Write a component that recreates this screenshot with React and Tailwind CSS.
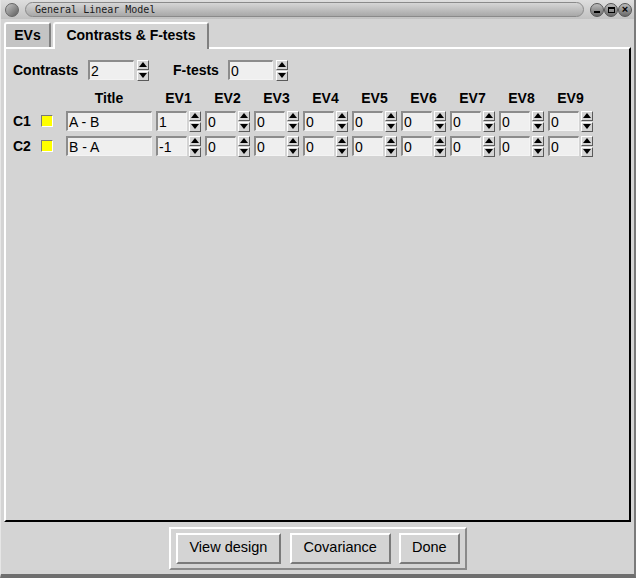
import React from "react";

const F = { fontFamily: '"Liberation Sans", Arial, sans-serif' };

function Arrow({ up }) {
  return (
    <svg width="8" height="5" viewBox="0 0 8 5">
      {up ? <polygon points="0,5 8,5 4,0" fill="#000" /> : <polygon points="0,0 8,0 4,5" fill="#000" />}
    </svg>
  );
}

function SpinBtn({ up }) {
  return (
    <div className="w-[12px] h-[10px] bg-[#d4d4d4] border-t border-l border-t-white border-l-white border-b border-r border-b-[#5a5a5a] border-r-[#5a5a5a] flex items-center justify-center">
      <Arrow up={up} />
    </div>
  );
}

function Spin() {
  return (
    <div className="flex flex-col gap-px">
      <SpinBtn up />
      <SpinBtn />
    </div>
  );
}

function Input({ w, value }) {
  return (
    <div
      className={`${w} h-[20px] bg-[#efefef] border-t-2 border-l-2 border-t-[#8c8c8c] border-l-[#8c8c8c] border-b border-r border-b-[#f4f4f4] border-r-[#f4f4f4] pl-[1px] flex items-center text-[14px] text-black leading-none`}
    >
      {value}
    </div>
  );
}

function EVCell({ value }) {
  return (
    <div className="w-[49px] flex items-center gap-[2px] shrink-0">
      <Input w="w-[31px]" value={value} />
      <Spin />
    </div>
  );
}

function Row({ label, title, vals }) {
  return (
    <div className="flex items-center h-[20px]">
      <div className="w-[28px] text-[14px] font-bold">{label}</div>
      <div className="w-[25px]">
        <div className="w-[12px] h-[12px] bg-[#ffff00] border-t border-l border-t-[#7a7a7a] border-l-[#7a7a7a] border-b border-r border-b-white border-r-white" />
      </div>
      <Input w="w-[86px]" value={title} />
      <div className="w-[4px]" />
      {vals.map((v, i) => (
        <EVCell key={i} value={v} />
      ))}
    </div>
  );
}

function WinBtn({ children }) {
  return (
    <div className="w-[14px] h-[14px] rounded-full bg-gradient-to-b from-[#bcbcbc] to-[#6a6a6a] border border-[#555] flex items-center justify-center">
      {children}
    </div>
  );
}

export default function App() {
  const evs = ["EV1", "EV2", "EV3", "EV4", "EV5", "EV6", "EV7", "EV8", "EV9"];
  return (
    <div style={F} className="w-[636px] h-[578px] bg-[#d4d4d4] flex flex-col overflow-hidden border-r-2 border-r-[#7a7a7a] border-b-4 border-b-[#6e6e6e] border-l border-l-[#e6e6e6]">
      {/* title bar */}
      <div className="h-[19px] bg-gradient-to-b from-[#dedede] to-[#c2c2c2] flex items-center pl-[4px] pr-[2px] gap-[6px]">
        <div className="w-[14px] h-[14px] rounded-full bg-gradient-to-br from-[#c8c8c8] to-[#5e5e5e] border border-[#666]" />
        <div className="flex-1 h-[15px] rounded-full bg-gradient-to-b from-[#d6d6d6] to-[#a8a8a8] border border-[#8a8a8a] flex items-center pl-[9px]">
          <span style={{ fontFamily: '"DejaVu Sans Mono", monospace' }} className="text-[10px] text-[#1a1a1a] leading-none">
            General Linear Model
          </span>
        </div>
        <div className="flex gap-0">
          <WinBtn>
            <div className="w-[6px] h-[2px] bg-black mt-[5px]" />
          </WinBtn>
          <WinBtn>
            <div className="w-[7px] h-[6px] border border-black border-t-2" />
          </WinBtn>
          <WinBtn>
            <span className="text-[11px] font-bold leading-none text-black">×</span>
          </WinBtn>
        </div>
      </div>

      <div className="flex-1 flex flex-col px-[3px] pt-[1px]">
        {/* tabs */}
        <div className="h-[27px] flex items-end relative z-10">
          <div className="h-[25px] w-[47px] bg-[#c4c4c4] border-t-2 border-l-2 border-t-white border-l-white border-r-2 border-r-[#808080] rounded-tl-[3px] rounded-tr-[3px] flex items-center justify-center text-[14px] font-bold">
            EVs
          </div>
          <div className="w-[2px]" />
          <div className="h-[27px] w-[156px] bg-[#d4d4d4] border-t-2 border-l-2 border-t-white border-l-white border-r-2 border-r-[#808080] rounded-tl-[3px] rounded-tr-[3px] flex items-center justify-center text-[14px] font-bold -mb-[2px] pb-[2px]">
            Contrasts &amp; F-tests
          </div>
        </div>

        {/* panel */}
        <div className="flex-1 border-t-2 border-l-2 border-t-white border-l-white border-b-2 border-r-2 border-b-black border-r-black pl-[7px] pt-[10px] flex flex-col">
          <div className="flex items-center h-[22px]">
            <div className="w-[75px] text-[14px] font-bold">Contrasts</div>
            <Input w="w-[46px]" value="2" />
            <div className="w-[3px]" />
            <Spin />
            <div className="w-[24px]" />
            <div className="w-[55px] text-[14px] font-bold">F-tests</div>
            <Input w="w-[45px]" value="0" />
            <div className="w-[3px]" />
            <Spin />
          </div>

          <div className="flex items-end h-[28px] pb-[1px] mt-[1px]">
            <div className="w-[53px]" />
            <div className="w-[86px] text-center text-[14px] font-bold">Title</div>
            <div className="w-[4px]" />
            {evs.map((e) => (
              <div key={e} className="w-[49px] pr-[4px] text-center text-[14px] font-bold">
                {e}
              </div>
            ))}
          </div>

          <div className="flex flex-col gap-[5px] mt-[1px]">
            <Row label="C1" title="A - B" vals={["1", "0", "0", "0", "0", "0", "0", "0", "0"]} />
            <Row label="C2" title="B - A" vals={["-1", "0", "0", "0", "0", "0", "0", "0", "0"]} />
          </div>
        </div>
      </div>

      {/* footer */}
      <div className="h-[52px] flex items-center justify-center pl-[1px]">
        <div className="h-[43px] w-[298px] border-2 border-t-white border-l-white border-b-[#8a8a8a] border-r-[#8a8a8a] flex items-center px-[5px] gap-[8px]">
          <button className="h-[31px] w-[106px] bg-[#d4d4d4] border-2 border-t-white border-l-white border-b-[#7a7a7a] border-r-[#7a7a7a] text-[14.5px] text-black">
            View design
          </button>
          <button className="h-[31px] w-[102px] bg-[#d4d4d4] border-2 border-t-white border-l-white border-b-[#7a7a7a] border-r-[#7a7a7a] text-[14.5px] text-black ml-[1px]">
            Covariance
          </button>
          <button className="h-[31px] w-[62px] bg-[#d4d4d4] border-2 border-t-white border-l-white border-b-[#7a7a7a] border-r-[#7a7a7a] text-[14.5px] text-black">
            Done
          </button>
        </div>
      </div>
    </div>
  );
}
